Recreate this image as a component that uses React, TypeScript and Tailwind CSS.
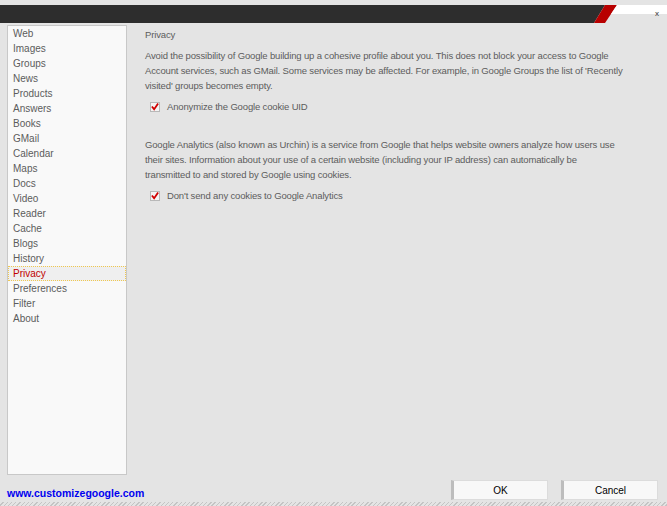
import React from "react";

const items = [
  "Web",
  "Images",
  "Groups",
  "News",
  "Products",
  "Answers",
  "Books",
  "GMail",
  "Calendar",
  "Maps",
  "Docs",
  "Video",
  "Reader",
  "Cache",
  "Blogs",
  "History",
  "Privacy",
  "Preferences",
  "Filter",
  "About",
];

function Check({ label }: { label: string }) {
  return (
    <div className="flex items-center h-[15px] pl-[5px]">
      <span className="w-[10px] h-[10px] border border-[#b8b8b8] bg-[#f4f4f4] flex items-center justify-center">
        <svg width="9" height="9" viewBox="0 0 9 9">
          <path d="M1 4.5 L3.5 7.5 L8 1" stroke="#d00000" strokeWidth="2" fill="none" />
        </svg>
      </span>
      <span className="ml-[7px]">{label}</span>
    </div>
  );
}

export default function App() {
  return (
    <div
      className="relative w-[667px] h-[506px] bg-[#e4e4e4] flex flex-col text-[10px] leading-[15px] text-[#5c5c5c] overflow-hidden"
      style={{ fontFamily: '"Liberation Sans", Arial, sans-serif' }}
    >
      {/* title bar */}
      <div className="mt-[5px] h-[18px] flex">
        <div className="flex-1 bg-[#2d2d2d]" />
        <svg width="73" height="18" viewBox="0 0 73 18" className="block">
          <rect width="73" height="18" fill="#e4e4e4" />
          <polygon points="0,0 11,0 0,18" fill="#2d2d2d" />
          <polygon points="11,0 23,0 11,18 0,18" fill="#b80000" />
          <polygon points="23,0 73,0 73,9 17,9" fill="#ffffff" />
        </svg>
      </div>
      <div className="absolute left-[655px] top-[9px] text-[8px] leading-[10px] text-[#333]">x</div>

      {/* body */}
      <div className="flex mt-[2px]">
        <div className="ml-[7px] w-[120px] h-[450px] border border-[#c8c8c8] bg-[#f9f9f9] flex flex-col">
          {items.map((it) =>
            it === "Privacy" ? (
              <div
                key={it}
                className="h-[15px] leading-[13px] pl-[4px] border border-dotted border-[#f0c850] bg-[#efefef] text-[#c00000]"
              >
                {it}
              </div>
            ) : (
              <div key={it} className="h-[15px] leading-[15px] pl-[5px]">
                {it}
              </div>
            )
          )}
        </div>

        <div className="ml-[18px] w-[515px] pt-[2px] text-[9.5px] tracking-[-0.15px] whitespace-nowrap">
          <div className="h-[15px]">Privacy</div>
          <div className="mt-[6px]">
            <div>Avoid the possibility of Google building up a cohesive profile about you. This does not block your access to Google</div>
            <div>Account services, such as GMail. Some services may be affected. For example, in Google Groups the list of 'Recently</div>
            <div>visited' groups becomes empty.</div>
          </div>
          <div className="mt-[6px]">
            <Check label="Anonymize the Google cookie UID" />
          </div>
          <div className="mt-[23px]">
            <div>Google Analytics (also known as Urchin) is a service from Google that helps website owners analyze how users use</div>
            <div>their sites. Information about your use of a certain website (including your IP address) can automatically be</div>
            <div>transmitted to and stored by Google using cookies.</div>
          </div>
          <div className="mt-[6px]">
            <Check label="Don't send any cookies to Google Analytics" />
          </div>
        </div>
      </div>

      {/* footer */}
      <div className="flex items-start mt-[5px] h-[20px]">
        <div className="ml-[7px] mt-[7px] text-[10.5px] leading-[13px] font-bold text-[#0000f0]">
          www.customizegoogle.com
        </div>
        <div className="ml-auto flex gap-[13px] mr-[9px]">
          <button className="w-[97px] h-[20px] bg-[#f8f8f8] border border-[#dcdcdc] border-l-[3px] border-l-[#bdbdbd] text-black text-[10px]">
            OK
          </button>
          <button className="w-[97px] h-[20px] bg-[#f8f8f8] border border-[#dcdcdc] border-l-[3px] border-l-[#bdbdbd] text-black text-[10px]">
            Cancel
          </button>
        </div>
      </div>
      <div className="mt-auto h-[4px] bg-[repeating-linear-gradient(135deg,#e4e4e4_0px,#e4e4e4_2px,#c4c4c4_2px,#c4c4c4_3px)]" />
    </div>
  );
}
